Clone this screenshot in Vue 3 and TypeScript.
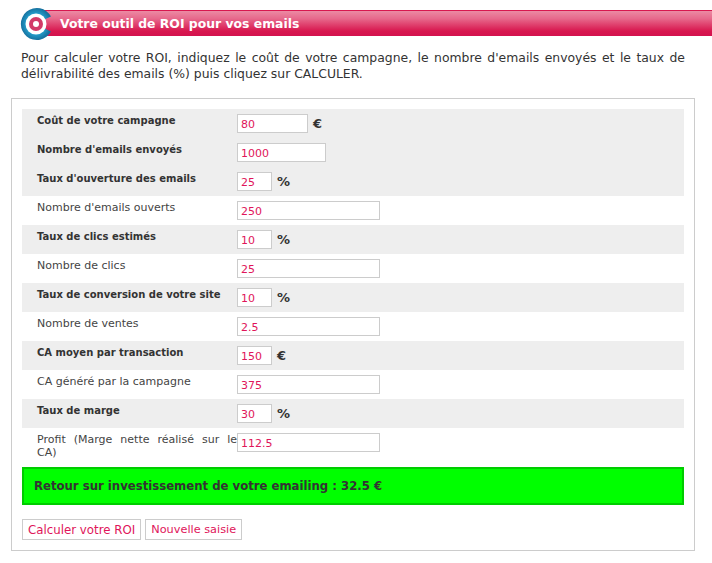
<script setup lang="ts">
interface Row {
  label: string
  value: string
  size: 'xs' | 's' | 'm' | 'l'
  unit?: string
  gray: boolean
}
const rows: Row[] = [
  { label: 'Coût de votre campagne', value: '80', size: 'm', unit: '€', gray: true },
  { label: "Nombre d'emails envoyés", value: '1000', size: 's', gray: true },
  { label: "Taux d'ouverture des emails", value: '25', size: 'xs', unit: '%', gray: true },
  { label: "Nombre d'emails ouverts", value: '250', size: 'l', gray: false },
  { label: 'Taux de clics estimés', value: '10', size: 'xs', unit: '%', gray: true },
  { label: 'Nombre de clics', value: '25', size: 'l', gray: false },
  { label: 'Taux de conversion de votre site', value: '10', size: 'xs', unit: '%', gray: true },
  { label: 'Nombre de ventes', value: '2.5', size: 'l', gray: false },
  { label: 'CA moyen par transaction', value: '150', size: 'xs', unit: '€', gray: true },
  { label: 'CA généré par la campagne', value: '375', size: 'l', gray: false },
  { label: 'Taux de marge', value: '30', size: 'xs', unit: '%', gray: true },
  { label: 'Profit (Marge nette réalisé sur le CA)', value: '112.5', size: 'l', gray: false },
]
</script>

<template>
  <div class="page">
    <header class="head">
      <svg class="logo" width="34" height="34" viewBox="0 0 34 34">
        <defs>
          <radialGradient id="ringBlue" cx="50%" cy="50%" r="50%">
            <stop offset="60%" stop-color="#25a3d0" />
            <stop offset="100%" stop-color="#16719f" />
          </radialGradient>
        </defs>
        <path d="M32 9.5A16 16 0 1 0 32 24.5L25.5 21.5A9.5 9.5 0 1 1 25.5 12.5Z" fill="url(#ringBlue)" />
        <circle cx="17" cy="17" r="10.5" fill="#fff" />
        <circle cx="17" cy="17" r="7" fill="#d23a68" />
        <circle cx="17" cy="17" r="3" fill="#fff" />
      </svg>
      <h1 class="title">Votre outil de ROI pour vos emails</h1>
    </header>
    <p class="intro">Pour calculer votre ROI, indiquez le coût de votre campagne, le nombre d'emails envoyés et le taux de délivrabilité des emails (%) puis cliquez sur CALCULER.</p>
    <section class="card">
      <div v-for="r in rows" :key="r.label" class="row" :class="{ gray: r.gray }">
        <div class="label" :class="{ bold: r.gray }">{{ r.label }}</div>
        <div class="field">
          <input class="input" :class="r.size" :value="r.value" type="text" />
          <span v-if="r.unit" class="unit">{{ r.unit }}</span>
        </div>
      </div>
      <div class="result">Retour sur investissement de votre emailing : 32.5 €</div>
      <div class="actions">
        <button class="btn" type="button">Calculer votre ROI</button>
        <button class="btn second" type="button">Nouvelle saisie</button>
      </div>
    </section>
  </div>
</template>

<style>
html, body { margin: 0; background: #fff; }
</style>

<style scoped>
.page {
  width: 712px;
  height: 563px;
  overflow: hidden;
  font-family: "DejaVu Sans", Verdana, sans-serif;
  color: #333;
  box-sizing: border-box;
  padding-top: 10px;
}
.head {
  position: relative;
  height: 26px;
  margin-left: 40px;
  box-sizing: border-box;
  border-top: 1px solid #d8174f;
  background: linear-gradient(#eb8aa3 0%, #e7698c 30%, #d8174f 80%, #d3124e 100%);
  display: flex;
  align-items: center;
}
.logo {
  position: absolute;
  left: -21px;
  top: -4px;
}
.title {
  margin: 0 0 0 20px;
  font-size: 12.4px;
  font-weight: 700;
  color: #fff;
}
.intro {
  margin: 14px 27px 0 21px;
  font-size: 12.4px;
  line-height: 16px;
  text-align: justify;
  color: #333;
}
.card {
  margin: 16px 17px 0 11px;
  height: 453px;
  box-sizing: border-box;
  border: 1px solid #ccc;
  padding: 10px;
}
.row {
  display: flex;
  min-height: 29px;
  box-sizing: border-box;
  padding-top: 5px;
  padding-left: 15px;
}
.row.gray { background: #eeeeee; }
.label {
  width: 200px;
  flex: none;
  font-size: 11px;
  line-height: 13px;
  text-align: justify;
  color: #444;
}
.label.bold { font-weight: 700; font-size: 10px; color: #333; }
.field {
  display: flex;
  align-items: center;
  gap: 5px;
  height: 19px;
}
.input {
  box-sizing: border-box;
  height: 19px;
  border: 1px solid #ccc;
  background: #fff;
  padding: 1px 3px 0;
  margin: 0;
  font-family: inherit;
  font-size: 11px;
  color: #e0155a;
  outline: none;
}
.input.xs { width: 35px; }
.input.m { width: 71px; }
.input.s { width: 89px; }
.input.l { width: 143px; }
.unit {
  font-size: 13px;
  font-weight: 700;
  color: #333;
}
.result {
  margin-top: 8px;
  height: 38px;
  box-sizing: border-box;
  border: 2px solid #00cc00;
  background: #00ff00;
  padding-left: 10px;
  display: flex;
  align-items: center;
  font-size: 11.7px;
  font-weight: 700;
  color: #333;
}
.actions {
  display: flex;
  gap: 4px;
  margin-top: 14px;
}
.btn {
  height: 21px;
  box-sizing: border-box;
  border: 1px solid #ccc;
  background: #fff;
  padding: 0 5px;
  margin: 0;
  font-family: inherit;
  font-size: 11.8px;
  color: #e0155a;
}
.btn.second { font-size: 11.3px; }
</style>
